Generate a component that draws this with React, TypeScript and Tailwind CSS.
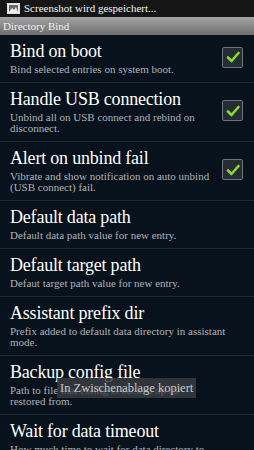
import React from 'react';

type Pref = {
  title: string;
  summary: string;
  checked?: boolean;
  narrow?: boolean;
};

const prefs: Pref[] = [
  { title: 'Bind on boot', summary: 'Bind selected entries on system boot.', checked: true },
  { title: 'Handle USB connection', summary: 'Unbind all on USB connect and rebind on disconnect.', checked: true },
  { title: 'Alert on unbind fail', summary: 'Vibrate and show notification on auto unbind (USB connect) fail.', checked: true },
  { title: 'Default data path', summary: 'Default data path value for new entry.' },
  { title: 'Default target path', summary: 'Defaut target path value for new entry.' },
  { title: 'Assistant prefix dir', summary: 'Prefix added to default data directory in assistant mode.' },
  { title: 'Backup config file', summary: 'Path to file that config is backed up to/ restored from.', narrow: true },
  { title: 'Wait for data timeout', summary: 'How much time to wait for data directory to become available.' },
];

const Checkbox: React.FC = () => (
  <div className="w-[21px] h-[21px] shrink-0 rounded-[2px] border border-[#6b737c] bg-[#252c33] flex items-center justify-center">
    <svg width="14" height="12" viewBox="0 0 14 12">
      <path d="M2 6.5 L5.5 10 L12.5 2" fill="none" stroke="#8fd630" strokeWidth="2.6" strokeLinecap="round" strokeLinejoin="round" />
    </svg>
  </div>
);

const App: React.FC = () => {
  return (
    <div className="w-[254px] h-[450px] overflow-hidden bg-[#08121c] relative" style={{ fontFamily: '"Liberation Serif", serif' }}>
      {/* status bar */}
      <div className="h-[17px] bg-[#161616] flex items-center px-[7px] gap-[4px]">
        <svg width="13" height="11" viewBox="0 0 13 11">
          <rect x="0.5" y="0.5" width="12" height="10" fill="#eee" stroke="#ddd" />
          <rect x="2" y="2" width="9" height="7" fill="#6a6a6a" />
          <path d="M2 9 L5 5 L7 7 L9 4 L11 9 Z" fill="#eee" />
        </svg>
        <span className="text-[11px] text-[#f2f2f2] leading-none">Screenshot wird gespeichert...</span>
      </div>
      {/* title bar */}
      <div className="h-[18px] bg-gradient-to-b from-[#a3a3a3] to-[#6f6f6f] flex items-center px-[3px]">
        <span className="text-[11px] text-[#f0f0f0] leading-none">Directory Bind</span>
      </div>

      <div className="flex flex-col">
        {prefs.map((p, i) => (
          <div key={i} className="flex items-center pl-[10px] pr-[11px] pt-[4px] pb-[7px] border-b border-[#1d2833]">
            <div className={p.checked ? 'flex-1 min-w-0 pr-[6px]' : 'flex-1 min-w-0 pr-[11px]'}>
              <div className="text-[18px] text-white leading-[24px] tracking-[-0.2px]">{p.title}</div>
              <div className={p.narrow ? 'text-[11px] text-[#aeb3b8] leading-[11px] mt-[1px] max-w-[205px]' : 'text-[11px] text-[#aeb3b8] leading-[11px] mt-[1px]'}>
                {p.summary}
              </div>
            </div>
            {p.checked && <Checkbox />}
          </div>
        ))}
      </div>

      {/* toast */}
      <div className="absolute left-[57px] top-[378px] h-[20px] w-[139px] px-[3px] bg-[#3b3f43]/80 flex items-center">
        <span className="text-[12.5px] text-[#c8c8c8] leading-none whitespace-nowrap">In Zwischenablage kopiert</span>
      </div>
    </div>
  );
};

export default App;
